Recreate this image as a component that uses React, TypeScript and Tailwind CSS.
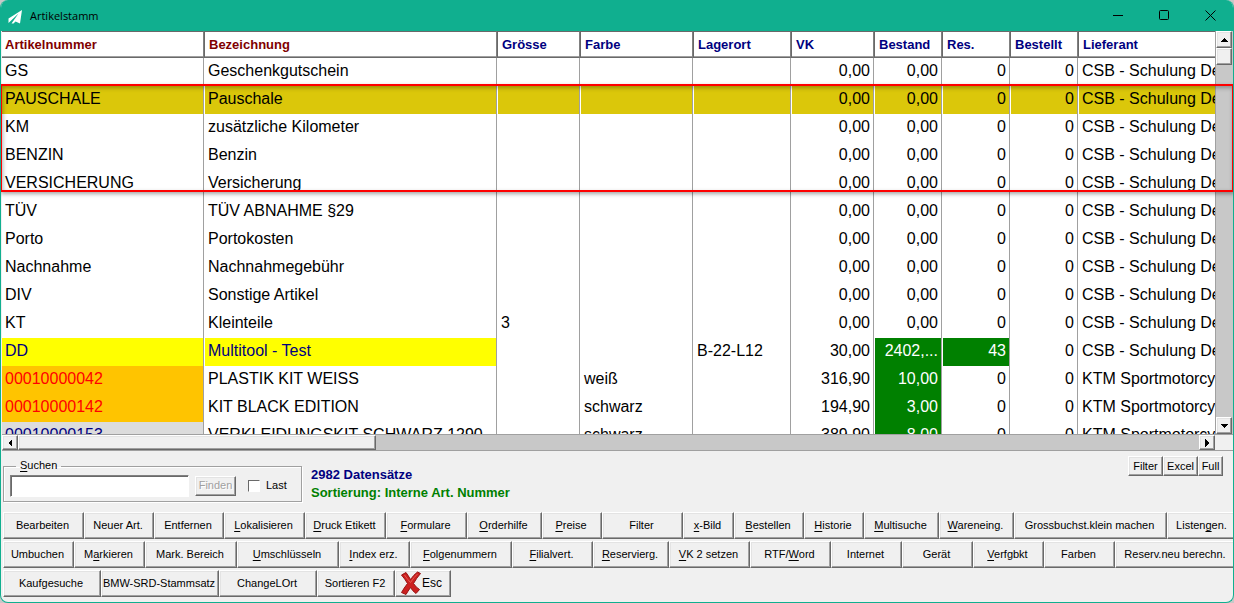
import type { ReactNode } from "react";
import clsx from "clsx";

const columns = [
  { label: "Artikelnummer", width: "w-[202px]", key: true },
  { label: "Bezeichnung", width: "w-[293px]", key: true },
  { label: "Grösse", width: "w-[83px]" },
  { label: "Farbe", width: "w-[113px]" },
  { label: "Lagerort", width: "w-[98px]" },
  { label: "VK", width: "w-[83px]", right: true },
  { label: "Bestand", width: "w-[68px]", right: true },
  { label: "Res.", width: "w-[68px]", right: true },
  { label: "Bestellt", width: "w-[68px]", right: true },
  { label: "Lieferant", width: "" },
];

const CSB = "CSB - Schulung De";
const KTM = "KTM Sportmotorcyc";
const GREEN = "bg-[#008000] text-white";
const ORANGE = "bg-[#ffc400] text-[#ff0000]";
const YELLOW = "bg-[#ffff00] text-[#000080]";

type Row = { cells: string[]; selected?: boolean; colors?: Record<number, string> };

const plain = (nr: string, name: string, size = ""): Row => ({
  cells: [nr, name, size, "", "", "0,00", "0,00", "0", "0", CSB],
});

const rows: Row[] = [
  plain("GS", "Geschenkgutschein"),
  { ...plain("PAUSCHALE", "Pauschale"), selected: true },
  plain("KM", "zusätzliche Kilometer"),
  plain("BENZIN", "Benzin"),
  plain("VERSICHERUNG", "Versicherung"),
  plain("TÜV", "TÜV ABNAHME §29"),
  plain("Porto", "Portokosten"),
  plain("Nachnahme", "Nachnahmegebühr"),
  plain("DIV", "Sonstige Artikel"),
  plain("KT", "Kleinteile", "3"),
  {
    cells: ["DD", "Multitool - Test", "", "", "B-22-L12", "30,00", "2402,...", "43", "0", CSB],
    colors: { 0: YELLOW, 1: YELLOW, 6: GREEN, 7: GREEN },
  },
  {
    cells: ["00010000042", "PLASTIK KIT WEISS", "", "weiß", "", "316,90", "10,00", "0", "0", KTM],
    colors: { 0: ORANGE, 6: GREEN },
  },
  {
    cells: ["00010000142", "KIT BLACK EDITION", "", "schwarz", "", "194,90", "3,00", "0", "0", KTM],
    colors: { 0: ORANGE, 6: GREEN },
  },
  {
    cells: ["00010000153", "VERKLEIDUNGSKIT SCHWARZ 1290", "", "schwarz", "", "389,90", "8,00", "0", "0", KTM],
    colors: { 0: "bg-[#dcdcdc] text-[#000080]", 6: GREEN },
  },
];

// "&" marks the access key, which is underlined
const toolbars = [
  [
    ["Bearbeiten", "w-[81px]"],
    ["Neuer Art.", "w-[70px]"],
    ["Entfernen", "w-[70px]"],
    ["&Lokalisieren", "w-[81px]"],
    ["&Druck Etikett", "w-[81px]"],
    ["&Formulare", "w-[81px]"],
    ["&Orderhilfe", "w-[75px]"],
    ["&Preise", "w-[60px]"],
    ["Filter", "w-[81px]"],
    ["&x-Bild", "w-[51px]"],
    ["&Bestellen", "w-[70px]"],
    ["&Historie", "w-[60px]"],
    ["&Multisuche", "w-[75px]"],
    ["&Wareneing.", "w-[75px]"],
    ["Grossbuchst.klein machen", "w-[153px]"],
    ["Listen&gen.", "w-[71px]"],
  ],
  [
    ["Umbuchen", "w-[71px]"],
    ["M&arkieren", "w-[71px]"],
    ["Mark. Bereich", "w-[92px]"],
    ["&Umschlüsseln", "w-[102px]"],
    ["&Index erz.", "w-[71px]"],
    ["&Folgenummern", "w-[102px]"],
    ["&Filialvert.", "w-[81px]"],
    ["&Reservierg.", "w-[76px]"],
    ["&VK 2 setzen", "w-[81px]"],
    ["RTF/&Word", "w-[81px]"],
    ["Internet", "w-[71px]"],
    ["Gerät", "w-[71px]"],
    ["&Verfgbkt", "w-[71px]"],
    ["Farben", "w-[71px]"],
    ["Reserv.neu berechn.", "w-[122px]"],
  ],
  [
    ["Kaufgesuche", "w-[98px]"],
    ["BMW-SRD-Stammsatz", "w-[118px]"],
    ["ChangeLOrt", "w-[98px]"],
    ["Sortieren F2", "w-[78px]"],
  ],
];

const raised =
  "border border-t-white border-l-white border-r-[#696969] border-b-[#696969] bg-[#f0f0f0] shadow-[inset_-1px_-1px_0_#a0a0a0,inset_1px_1px_0_#e3e3e3]";

function Label({ text }: { text: string }) {
  const [before, after] = text.split("&");
  if (after === undefined) return <>{text}</>;
  return (
    <>
      {before}
      <span className="underline underline-offset-2">{after[0]}</span>
      {after.slice(1)}
    </>
  );
}

function Button({ className, children, ...rest }: { className?: string; children: ReactNode; disabled?: boolean }) {
  return (
    <button
      type="button"
      className={clsx("flex shrink-0 items-center justify-center whitespace-nowrap", raised, className)}
      {...rest}
    >
      {children}
    </button>
  );
}

function ScrollButton({ label, points, className }: { label: string; points: string; className?: string }) {
  return (
    <button
      type="button"
      aria-label={label}
      className={clsx("flex shrink-0 items-center justify-center", raised, className)}
    >
      <svg width="8" height="8" viewBox="0 0 8 8" shapeRendering="crispEdges">
        <polygon points={points} fill="#000" />
      </svg>
    </button>
  );
}

function TitleBar() {
  return (
    <header className="flex h-[31px] shrink-0 items-center bg-[#10af8f]">
      <svg className="ml-[7px] mt-0.5 shrink-0" width="14" height="14" viewBox="0 0 14 14" fill="#fff">
        <path d="M14 0 0.5 8.5V13L10.5 3.5 3.5 13.5H5.5L7.5 11.5 12 13.5Z" />
      </svg>
      <h1 className="ml-2 grow pt-0.5 font-['Open_Sans',sans-serif] text-[11px]">Artikelstamm</h1>
      <div className="flex self-stretch text-black">
        <button type="button" aria-label="Minimieren" className="flex w-[46px] items-center justify-center">
          <svg width="11" height="11" viewBox="0 0 11 11" stroke="currentColor">
            <path d="M0 5.5H10" />
          </svg>
        </button>
        <button type="button" aria-label="Maximieren" className="flex w-[46px] items-center justify-center">
          <svg width="11" height="11" viewBox="0 0 11 11" fill="none" stroke="currentColor">
            <rect x="0.5" y="0.5" width="9" height="9" rx="1" />
          </svg>
        </button>
        <button type="button" aria-label="Schliessen" className="flex w-[46px] items-center justify-center">
          <svg width="11" height="11" viewBox="0 0 11 11" stroke="currentColor">
            <path d="M0.5 0.5 10.5 10.5M10.5 0.5 0.5 10.5" />
          </svg>
        </button>
      </div>
    </header>
  );
}

function ArticleTable() {
  return (
    <div className="min-w-0 grow overflow-hidden bg-white">
      <table className="w-full table-fixed border-separate border-spacing-0">
        <thead>
          <tr className="h-[27px] text-left text-[13px] leading-4">
            {columns.map((col, i) => (
              <th
                key={col.label}
                className={clsx(
                  "border-y border-[#696969] py-0 pr-1 font-bold shadow-[inset_0_-1px_0_#a0a0a0]",
                  i > 0 ? "border-l pl-1" : "pl-[3px]",
                  i < columns.length - 1 && "border-r border-r-[#808080]",
                  col.width,
                  col.key ? "text-[#800000]" : "text-[#000080]",
                )}
              >
                {col.label}
              </th>
            ))}
          </tr>
        </thead>
        <tbody>
          {rows.map((row) => (
            <tr key={row.cells[0]} className={clsx("h-7 text-base leading-6", row.selected && "bg-[#dbc70a]")}>
              {row.cells.map((cell, i) => (
                <td
                  key={i}
                  className={clsx(
                    "overflow-hidden whitespace-nowrap px-[3px] pb-0.5 pt-0",
                    i > 0 && "border-l border-l-white",
                    i < columns.length - 1 && "border-r border-r-[#a0a0a0]",
                    columns[i].right && "text-right",
                    row.colors?.[i],
                  )}
                >
                  {cell}
                </td>
              ))}
            </tr>
          ))}
        </tbody>
      </table>
    </div>
  );
}

function SearchPanel() {
  return (
    <fieldset className="mt-[3px] flex h-[43px] w-[299px] shrink-0 items-center border border-[#a0a0a0] pb-[3px] pl-[6px] shadow-[1px_1px_0_#fff,inset_1px_1px_0_#fff]">
      <legend className="ml-[6px] px-1 pb-0.5 text-[11px] leading-3">
        <Label text="&Suchen" />
      </legend>
      <input
        type="text"
        aria-label="Suchen"
        className="h-[22px] w-[179px] border border-t-[#808080] border-r-white border-b-white border-l-[#808080] bg-white px-1 text-[13px] shadow-[inset_1px_1px_0_#696969] outline-none"
      />
      <Button disabled className="ml-[6px] h-5 w-[41px] text-[#a0a0a0] [text-shadow:1px_1px_0_#fff]">
        Finden
      </Button>
      <label className="ml-3 flex items-center gap-[6px]">
        <input
          type="checkbox"
          className="size-3 appearance-none border border-t-[#696969] border-r-white border-b-white border-l-[#696969] bg-white"
        />
        Last
      </label>
    </fieldset>
  );
}

function App() {
  return (
    <div className="h-screen overflow-hidden bg-[#c8c8c8] font-['Liberation_Sans',Arial,sans-serif] text-[11px] text-black">
      <div className="flex h-full flex-col overflow-hidden rounded-lg border-x border-b border-[#10af8f] bg-[#f0f0f0]">
        <TitleBar />

        <main className="flex min-h-0 grow flex-col pl-px">
          <section className="relative flex min-h-0 grow">
            <ArticleTable />
            <div className="flex w-[18px] shrink-0 flex-col border-l border-[#a0a0a0] bg-[#c8c8c8] pr-px">
              <ScrollButton label="Nach oben" points="4,2 8,6 0,6" className="h-[17px]" />
              <div className={clsx("h-[17px]", raised)} />
              <div className="grow" />
              <ScrollButton label="Nach unten" points="0,2 8,2 4,6" className="h-[17px]" />
            </div>
            {/* marks the booking articles */}
            <div className="pointer-events-none absolute -left-0.5 -right-px top-[53px] h-[108px] border-2 border-[#ff0000] shadow-[1px_2px_4px_rgba(0,0,0,0.35),inset_1px_2px_4px_rgba(0,0,0,0.3)]" />
          </section>

          <div className="flex h-[17px] shrink-0 border-y border-[#a0a0a0] bg-[#c8c8c8]">
            <ScrollButton label="Nach links" points="6,0 6,8 2,4" className="w-4" />
            <div className={clsx("w-[358px]", raised)} />
            <div className="grow" />
            <ScrollButton label="Nach rechts" points="2,0 6,4 2,8" className="w-4" />
            <div className="w-[18px] bg-[#f0f0f0]" />
          </div>

          <section className="flex shrink-0 items-start pl-px pt-[5px]">
            <SearchPanel />
            <div className="grow pl-[9px] pt-[10px] text-[13px] font-bold leading-[18px]">
              <p className="text-[#000080]">2982 Datensätze</p>
              <p className="text-[#008000]">Sortierung: Interne Art. Nummer</p>
            </div>
            <div className="flex pr-[10px]">
              <Button className="h-5 w-[35px]">Filter</Button>
              <Button className="h-5 w-[35px]">Excel</Button>
              <Button className="h-5 w-[25px]">Full</Button>
            </div>
          </section>

          <nav className="flex shrink-0 flex-col gap-0.5 overflow-hidden pb-[5px] pl-px pt-[10px]">
            {toolbars.map((bar, i) => (
              <div key={i} className="flex">
                {bar.map(([text, width]) => (
                  <Button key={text} className={clsx("h-[27px] pr-0.5", width)}>
                    <span>
                      <Label text={text} />
                    </span>
                  </Button>
                ))}
                {i === toolbars.length - 1 && (
                  <Button className="h-[27px] w-[56px] pb-0.5 pr-1 text-xs">
                    <svg width="22" height="24" viewBox="0 0 22 24">
                      <path
                        d="M1.5 4 6 1.5Q8.500 5 10.500 8.500 13.500 4 17.500 1L20.500 2.500Q16.500 7 13.500 12.500 16 16.500 19.500 18.500L16 22.500Q12.500 20 10.500 16.500 8 20 6 23.500L1.500 21.500Q4 17 7.500 12.500 5 8 1.500 4Z"
                        fill="#cc2020"
                        stroke="#961414"
                      />
                      <path d="M4.500 4Q8 9 10.500 11.500 14 6 17.500 3" fill="none" stroke="#e65a50" />
                    </svg>
                    Esc
                  </Button>
                )}
              </div>
            ))}
          </nav>
        </main>
      </div>
    </div>
  );
}

export default App;
